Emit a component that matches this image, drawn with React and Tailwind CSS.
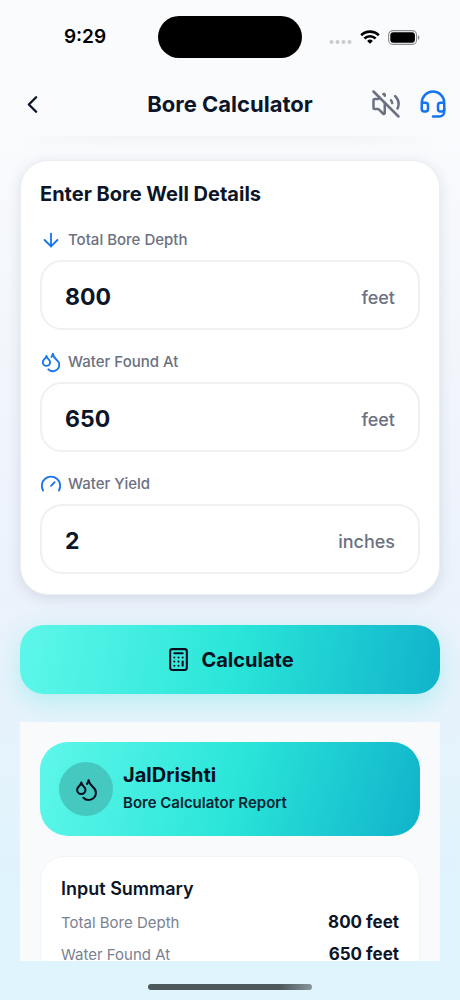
import React, { useState } from 'react';
import { ArrowDown, Calculator, ChevronLeft, Droplets, Gauge, Headset, VolumeOff } from 'lucide-react';

const FIELDS = [
    { id: 'depth', label: 'Total Bore Depth', unit: 'feet', icon: ArrowDown },
    { id: 'waterAt', label: 'Water Found At', unit: 'feet', icon: Droplets },
    { id: 'yield', label: 'Water Yield', unit: 'inches', icon: Gauge },
];

function StatusBar() {
    return (
        <div className="grid grid-cols-[1fr_144px_1fr] items-center pt-4">
            <span className="pl-3 text-center text-[19px] font-semibold leading-6 text-black">9:29</span>
            <div className="h-[42px] rounded-full bg-black" />
            <div className="flex items-center justify-center gap-2 pr-[14px]">
                <svg width="23" height="14" viewBox="0 0 23 14" fill="#c9cbcd" aria-hidden="true">
                    <circle cx="2.5" cy="12" r="2" />
                    <circle cx="8.5" cy="12" r="2" />
                    <circle cx="14.5" cy="12" r="2" />
                    <circle cx="20.5" cy="12" r="2" />
                </svg>
                <svg width="20" height="14" viewBox="0 0 20 14" fill="none" stroke="#000" strokeWidth="2.6" aria-hidden="true">
                    <path d="M1.2 5.2a12.6 12.6 0 0 1 17.6 0" />
                    <path d="M4.4 8.5a8 8 0 0 1 11.2 0" />
                    <path d="M10 13.8 7.1 11a4.2 4.2 0 0 1 5.8 0Z" fill="#000" stroke="none" />
                </svg>
                <svg width="32" height="15" viewBox="0 0 32 15" aria-hidden="true">
                    <rect x="0.6" y="0.6" width="28" height="13.8" rx="4.4" fill="none" stroke="#8b8c8e" strokeWidth="1.1" />
                    <rect x="2.3" y="2.3" width="24.6" height="10.4" rx="3" fill="#000" />
                    <path d="M30 5.2v4.6c.9-.4 1.5-1.3 1.5-2.3S30.9 5.6 30 5.2Z" fill="#8b8c8e" />
                </svg>
            </div>
        </div>
    );
}

function Header() {
    return (
        <header className="grid grid-cols-[1fr_auto_1fr] items-center px-3 pt-[30px] pb-4">
            <button type="button" aria-label="Back" className="ml-1 flex size-8 items-center justify-center text-[#0d1528]">
                <ChevronLeft size={29} strokeWidth={2} />
            </button>
            <h1 className="text-[22px] font-bold leading-8 text-[#0d1528]">Bore Calculator</h1>
            <div className="flex items-center justify-end gap-[17px]">
                <button type="button" aria-label="Unmute" className="text-[#6b7180]">
                    <VolumeOff size={30} strokeWidth={2} />
                </button>
                <button type="button" aria-label="Support" className="text-[#1673f0]">
                    <Headset size={30} strokeWidth={2} />
                </button>
            </div>
        </header>
    );
}

function Field({ id, label, unit, icon: Icon, value, onChange }) {
    return (
        <div>
            <label htmlFor={id} className="flex items-center gap-[6px] text-[15px] font-medium leading-6 text-[#6b7180]">
                <Icon size={22} strokeWidth={2} className="text-[#1673f0]" />
                {label}
            </label>
            <div className="mt-2 flex h-[70px] items-center rounded-[22px] border-2 border-[#f0f0f1] bg-white px-[23px] pt-[3px]">
                <input
                    id={id}
                    type="text"
                    inputMode="numeric"
                    value={value}
                    onChange={(e) => onChange(e.target.value)}
                    className="min-w-0 flex-1 bg-transparent text-[23px] font-bold leading-8 text-[#0d1528] outline-none"
                />
                <span className="pt-[3px] text-lg font-medium text-[#6b7180]">{unit}</span>
            </div>
        </div>
    );
}

export default function App() {
    const [values, setValues] = useState({ depth: '800', waterAt: '650', yield: '2' });

    return (
        <div className="flex h-screen flex-col bg-linear-to-b from-[#fafbfd] from-10% via-[#ebf2fb] via-60% to-[#dff4fd] to-90% font-[Inter,sans-serif]">
            <StatusBar />
            <Header />

            {/* Soft edge under the header */}
            <div className="mx-6 h-3 shrink-0 bg-linear-to-b from-[#f1f4f6] to-transparent mask-x-from-80%" />

            <main className="-mt-3 min-h-0 flex-1 overflow-y-auto px-5 pt-6 [scrollbar-width:none]">
                {/* Inputs */}
                <section className="rounded-[28px] border border-[#ebedf0] bg-white px-[19px] pt-[19px] pb-5 shadow-[0_3px_14px_rgba(30,50,80,0.12)]">
                    <h2 className="text-xl font-bold leading-7 text-[#0d1528]">Enter Bore Well Details</h2>
                    <div className="mt-5 space-y-5">
                        {FIELDS.map((field) => (
                            <Field
                                key={field.id}
                                {...field}
                                value={values[field.id]}
                                onChange={(value) => setValues({ ...values, [field.id]: value })}
                            />
                        ))}
                    </div>
                </section>

                <button
                    type="button"
                    className="mt-[30px] flex h-[69px] w-full items-center justify-center gap-[10px] rounded-3xl bg-linear-[100deg] from-[#5ef7ea] via-[#2be6d9] to-[#10b3cb] text-xl font-bold text-[#05101f] shadow-[0_8px_24px_rgba(45,225,215,0.28)]"
                >
                    <Calculator size={25} strokeWidth={2} />
                    Calculate
                </button>

                {/* Report */}
                <section className="mt-7 bg-[#f8fafc] p-5">
                    <div className="flex items-center gap-[10px] rounded-[28px] bg-linear-[105deg] from-[#5ef7ea] via-[#2be6d9] to-[#10b3cb] px-[19px] py-[19px]">
                        <div className="flex size-[54px] items-center justify-center rounded-full bg-[#45c8c0] text-[#05101f]">
                            <Droplets size={25} strokeWidth={2} />
                        </div>
                        <div>
                            <h2 className="text-xl font-bold leading-7 text-[#05101f]">JalDrishti</h2>
                            <p className="text-[15px] font-semibold leading-7 text-[#0b2433]">Bore Calculator Report</p>
                        </div>
                    </div>

                    <div className="mt-5 rounded-3xl border border-[#f2f4f6] bg-white px-5 pt-[18px] pb-5">
                        <h3 className="text-lg font-semibold leading-7 text-[#0d1528]">Input Summary</h3>
                        <dl className="mt-1">
                            {FIELDS.slice(0, 2).map((field) => (
                                <div key={field.id} className="flex h-8 items-center justify-between">
                                    <dt className="text-[15px] text-[#7b8190]">{field.label}</dt>
                                    <dd className="text-[17px] font-bold text-[#0d1528]">
                                        {values[field.id]} {field.unit}
                                    </dd>
                                </div>
                            ))}
                        </dl>
                    </div>
                </section>
            </main>

            {/* Home indicator */}
            <footer className="flex h-[39px] shrink-0 items-end justify-center pb-[10px]">
                <div className="h-[6px] w-[164px] rounded-full bg-linear-to-r from-[#4d585c] from-80% to-[#87949a]" />
            </footer>
        </div>
    );
}
